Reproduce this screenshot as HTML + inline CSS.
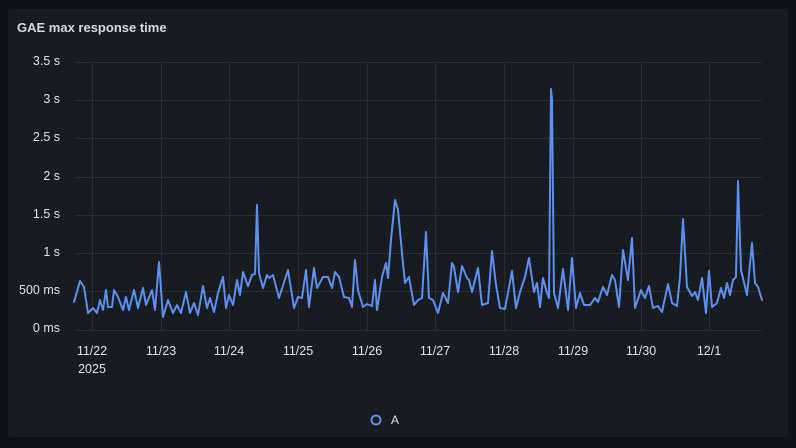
<!DOCTYPE html><html><head><style>
html,body{margin:0;padding:0;width:796px;height:448px;background:#111217;overflow:hidden;font-family:"Liberation Sans",sans-serif}
.panel{position:absolute;left:8px;top:9px;width:780px;height:428px;background:#181b1f;border-radius:3px}
.title{position:absolute;left:17px;top:20px;color:#d8d9e0;font-size:13px;font-weight:bold}
.yl{position:absolute;right:736px;color:#e0e1e8;font-size:12.5px;text-align:right;white-space:nowrap}
.xl{position:absolute;top:344px;color:#e0e1e8;font-size:12.5px;width:60px;margin-left:-30px;text-align:center}
</style></head><body>
<div class="panel"></div>
<div class="title">GAE max response time</div>
<div class="yl" style="top:54px">3.5 s</div>
<div class="yl" style="top:92px">3 s</div>
<div class="yl" style="top:130px">2.5 s</div>
<div class="yl" style="top:169px">2 s</div>
<div class="yl" style="top:207px">1.5 s</div>
<div class="yl" style="top:245px">1 s</div>
<div class="yl" style="top:283px">500 ms</div>
<div class="yl" style="top:321px">0 ms</div>
<div class="xl" style="left:92px">11/22</div>
<div class="xl" style="left:92px;top:362px">2025</div>
<div class="xl" style="left:161px">11/23</div>
<div class="xl" style="left:229px">11/24</div>
<div class="xl" style="left:298px">11/25</div>
<div class="xl" style="left:367px">11/26</div>
<div class="xl" style="left:435px">11/27</div>
<div class="xl" style="left:504px">11/28</div>
<div class="xl" style="left:573px">11/29</div>
<div class="xl" style="left:641px">11/30</div>
<div class="xl" style="left:709px">12/1</div>
<svg width="796" height="448" style="position:absolute;left:0;top:0">
<g stroke="#2b2d33" stroke-width="1">
<line x1="75" x2="762" y1="62.5" y2="62.5"/><line x1="75" x2="762" y1="100.5" y2="100.5"/><line x1="75" x2="762" y1="138.5" y2="138.5"/><line x1="75" x2="762" y1="177.5" y2="177.5"/><line x1="75" x2="762" y1="215.5" y2="215.5"/><line x1="75" x2="762" y1="253.5" y2="253.5"/><line x1="75" x2="762" y1="291.5" y2="291.5"/><line x1="75" x2="762" y1="330.5" y2="330.5"/>
<line x1="92.5" x2="92.5" y1="62" y2="330"/><line x1="161.5" x2="161.5" y1="62" y2="330"/><line x1="229.5" x2="229.5" y1="62" y2="330"/><line x1="298.5" x2="298.5" y1="62" y2="330"/><line x1="367.5" x2="367.5" y1="62" y2="330"/><line x1="435.5" x2="435.5" y1="62" y2="330"/><line x1="504.5" x2="504.5" y1="62" y2="330"/><line x1="573.5" x2="573.5" y1="62" y2="330"/><line x1="641.5" x2="641.5" y1="62" y2="330"/><line x1="709.5" x2="709.5" y1="62" y2="330"/>
</g>
<polyline fill="none" stroke="#5b8ff0" stroke-width="2" stroke-linejoin="round" stroke-linecap="round" points="74,302 80,281 84,287 88,313 93,308 97,313 100,300 103,310 106,290 108,307 112,307 114,290 118,297 123,310 126,297 129,310 134,290 138,308 143,288 146,305 152,290 155,310 159,262 163,317 168,300 173,313 177,305 181,313 186,292 190,313 194,303 198,315 203,286 207,308 210,298 214,312 218,293 223,277 226,308 229,295 233,305 237,280 240,295 243,272 248,286 252,275 255,274 257,205 259,273 263,288 267,275 269,278 273,275 279,298 288,270 294,308 298,297 302,298 306,270 309,307 314,268 317,288 323,277 328,277 332,288 335,272 339,277 344,297 349,298 352,307 355,260 358,290 363,307 367,304 372,306 375,280 377,310 382,277 386,263 388,278 391,240 395,200 398,210 402,253 405,283 409,277 414,305 418,300 422,298 426,232 429,298 433,300 438,313 443,293 448,303 452,263 454,267 458,292 462,266 467,278 469,280 472,292 478,268 482,305 488,303 492,251 496,285 500,308 505,309 512,271 516,308 520,292 525,277 529,258 534,292 537,283 540,307 543,278 547,293 549,298 551,89 552,100 554,293 558,308 563,269 568,310 572,258 576,308 580,293 584,305 590,305 595,298 598,302 603,287 607,295 612,275 615,280 619,307 623,250 628,280 632,238 635,308 641,290 645,298 649,286 653,308 658,306 662,312 668,284 672,303 677,306 680,277 683,219 687,287 692,296 695,292 698,300 702,278 706,313 709,271 712,307 717,303 721,288 724,298 727,283 730,295 733,280 736,277 738,181 741,270 747,295 752,243 755,283 758,287 762,300"/>
<circle cx="376" cy="420" r="4.5" fill="none" stroke="#5b8ff0" stroke-width="2"/>
<text x="391" y="424" fill="#e0e1e8" font-size="12" font-family="Liberation Sans, sans-serif">A</text>
</svg>
</body></html>
